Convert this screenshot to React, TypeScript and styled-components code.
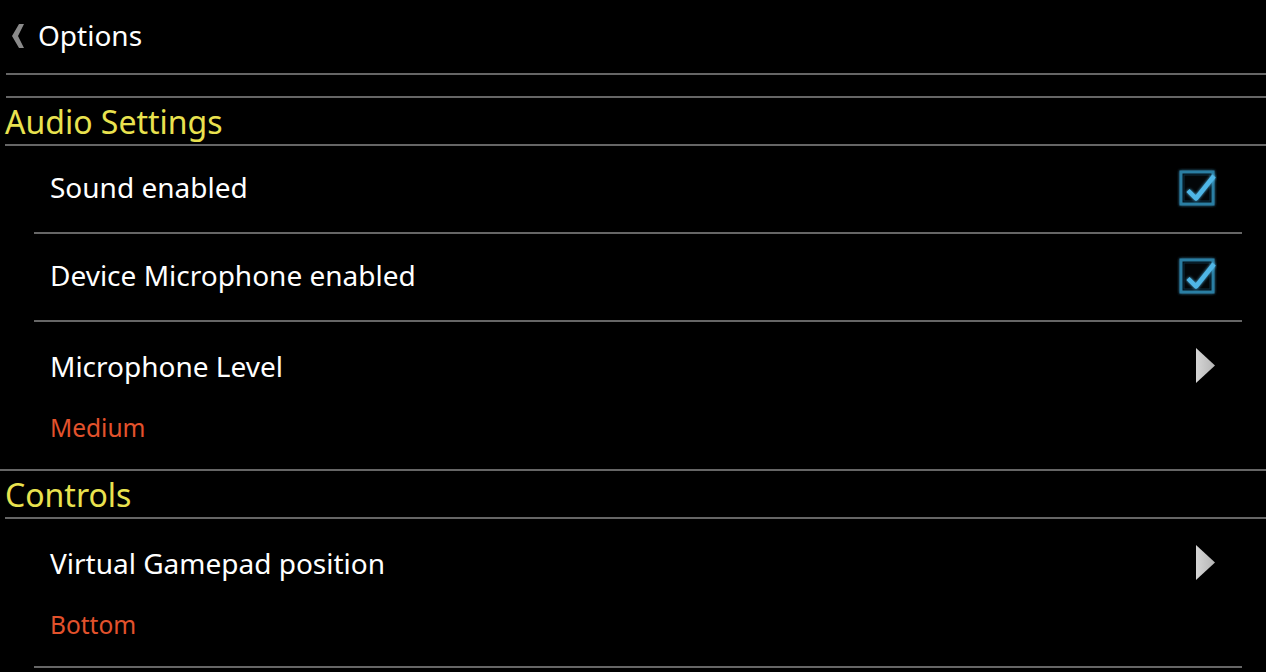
import React from "react";
import styled, { createGlobalStyle } from "styled-components";

const Global = createGlobalStyle`
  html, body { margin: 0; padding: 0; background: #000; }
  body { font-family: "Noto Sans", Roboto, "Liberation Sans", sans-serif; }
  #root { width: 1266px; height: 672px; overflow: hidden; background: #000; }
`;

const Page = styled.div`
  width: 1266px;
  height: 672px;
  background: #000;
  padding-left: 6px;
  box-sizing: border-box;
  display: flex;
  flex-direction: column;
`;

const Header = styled.div`
  height: 69px;
  padding-bottom: 4px;
  display: flex;
  align-items: center;
  gap: 13px;
  border-bottom: 2px solid #666;
`;

const BackIcon = styled.svg`
  width: 14px;
  height: 24px;
  margin-left: 5px;
  margin-top: 2px;
`;

const Title = styled.span`
  color: #fff;
  font-size: 28px;
  line-height: 36px;
`;

const Spacer = styled.div`
  height: 21px;
  border-bottom: 2px solid #666;
`;

const Category = styled.div`
  height: 46px;
  display: flex;
  align-items: center;
  margin-left: -1px;
  color: #e9e24f;
  font-size: 32px;
  border-bottom: 2px solid #666;
`;

const Item = styled.div<{ $summary?: boolean }>`
  margin-left: 28px;
  margin-right: 24px;
  min-height: ${(p) => (p.$summary ? 149 : 88)}px;
  box-sizing: border-box;
  display: flex;
  align-items: ${(p) => (p.$summary ? "flex-start" : "center")};
  padding: ${(p) => (p.$summary ? "26px 25px 0 16px" : "0 25px 4px 16px")};
  border-bottom: 2px solid #666;
`;

const ItemFull = styled(Item)`
  margin-left: -6px;
  padding-left: 50px;
  margin-right: 0;
  padding-right: 49px;
`;

const Texts = styled.div`
  flex: 1;
  display: flex;
  flex-direction: column;
  gap: 29px;
`;

const ItemTitle = styled.div`
  color: #fff;
  font-size: 28px;
  line-height: 36px;
`;

const Summary = styled.div`
  color: #e3522c;
  font-size: 24.5px;
  line-height: 30px;
`;

const Widget = styled.div`
  width: 40px;
  display: flex;
  justify-content: flex-end;
  margin-top: 2px;
`;

const ArrowWrap = styled.div`
  width: 40px;
  display: flex;
  justify-content: flex-end;
  margin-top: -1px;
`;

const CheckBox = () => (
  <svg width="40" height="40" viewBox="0 0 40 40">
    <defs>
      <filter id="glow" x="-30%" y="-30%" width="160%" height="160%">
        <feGaussianBlur stdDeviation="1.4" result="b" />
        <feMerge>
          <feMergeNode in="b" />
          <feMergeNode in="SourceGraphic" />
        </feMerge>
      </filter>
    </defs>
    <rect x="4" y="4" width="32" height="32" fill="#061016" stroke="#2c7ea3" strokeWidth="3" filter="url(#glow)" />
    <rect x="7" y="7" width="26" height="26" fill="#030608" stroke="#0f2f3e" strokeWidth="1" />
    <path d="M11 22.5 L19 30.5 L37 8" fill="none" stroke="#4fb6e6" strokeWidth="4.5" strokeLinejoin="round" filter="url(#glow)" />
  </svg>
);

const Arrow = () => (
  <svg width="22" height="38" viewBox="0 0 22 38">
    <defs>
      <linearGradient id="ag" x1="0" y1="0" x2="1" y2="0">
        <stop offset="0" stopColor="#d6d6d6" />
        <stop offset="1" stopColor="#b4b4b4" />
      </linearGradient>
    </defs>
    <polygon points="1,1 1,36 20,18.5" fill="url(#ag)" />
  </svg>
);

export default function App() {
  return (
    <>
      <Global />
      <Page>
        <Header>
          <BackIcon viewBox="0 0 14 24">
            <polygon points="1,12 8,0 13,0 7,12 13,24 8,24" fill="#8a8a8a" />
          </BackIcon>
          <Title>Options</Title>
        </Header>
        <Spacer />
        <Category>Audio Settings</Category>
        <Item>
          <Texts>
            <ItemTitle>Sound enabled</ItemTitle>
          </Texts>
          <Widget>
            <CheckBox />
          </Widget>
        </Item>
        <Item>
          <Texts>
            <ItemTitle>Device Microphone enabled</ItemTitle>
          </Texts>
          <Widget>
            <CheckBox />
          </Widget>
        </Item>
        <ItemFull $summary>
          <Texts>
            <ItemTitle>Microphone Level</ItemTitle>
            <Summary>Medium</Summary>
          </Texts>
          <ArrowWrap>
            <Arrow />
          </ArrowWrap>
        </ItemFull>
        <Category>Controls</Category>
        <Item $summary>
          <Texts>
            <ItemTitle>Virtual Gamepad position</ItemTitle>
            <Summary>Bottom</Summary>
          </Texts>
          <ArrowWrap>
            <Arrow />
          </ArrowWrap>
        </Item>
      </Page>
    </>
  );
}
